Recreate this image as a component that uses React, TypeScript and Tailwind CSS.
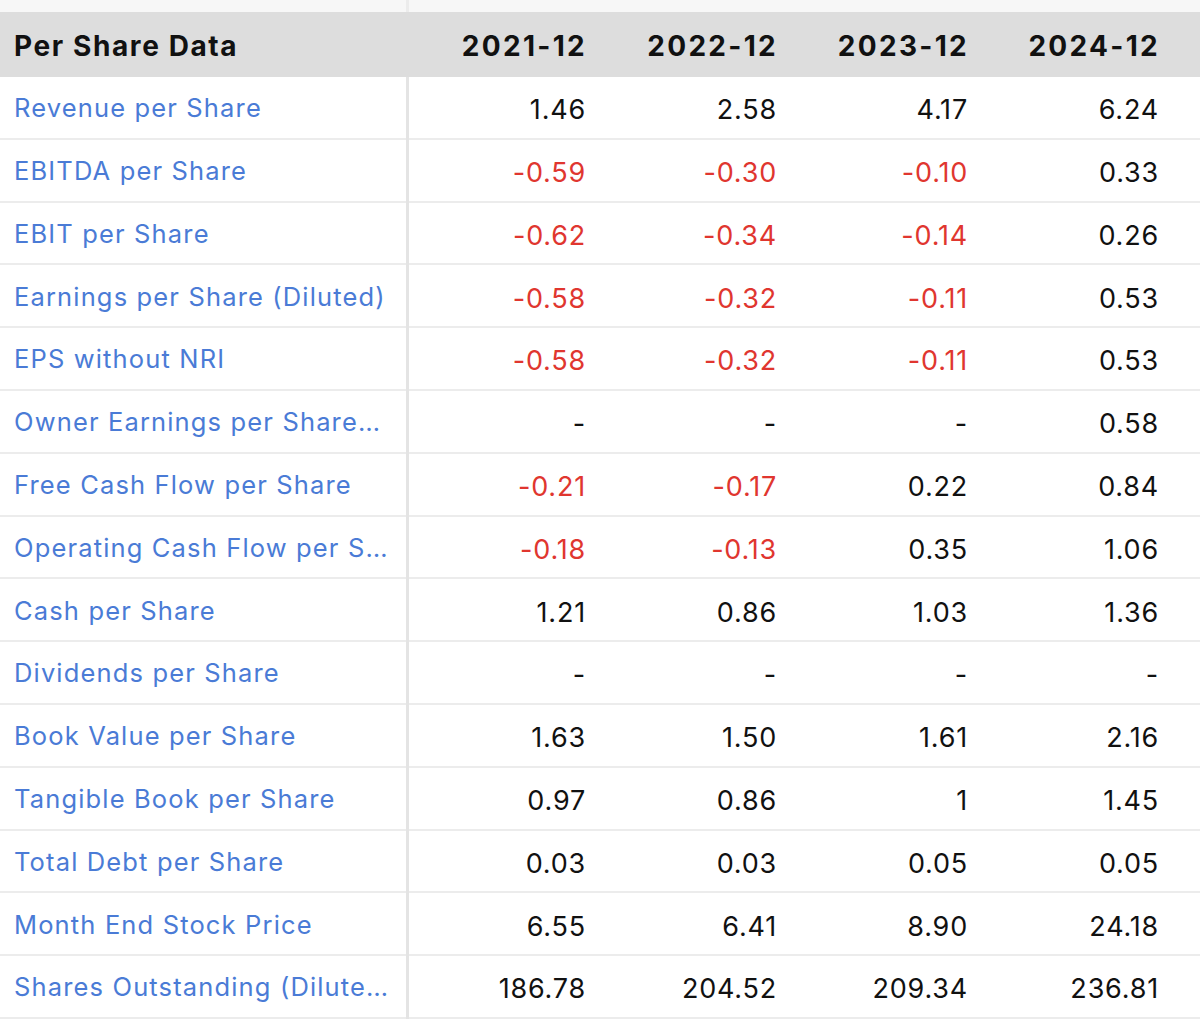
import React from "react";

type Row = { label: string; values: string[] };

const rows: Row[] = [
  { label: "Revenue per Share", values: ["1.46", "2.58", "4.17", "6.24"] },
  { label: "EBITDA per Share", values: ["-0.59", "-0.30", "-0.10", "0.33"] },
  { label: "EBIT per Share", values: ["-0.62", "-0.34", "-0.14", "0.26"] },
  { label: "Earnings per Share (Diluted)", values: ["-0.58", "-0.32", "-0.11", "0.53"] },
  { label: "EPS without NRI", values: ["-0.58", "-0.32", "-0.11", "0.53"] },
  { label: "Owner Earnings per Share…", values: ["-", "-", "-", "0.58"] },
  { label: "Free Cash Flow per Share", values: ["-0.21", "-0.17", "0.22", "0.84"] },
  { label: "Operating Cash Flow per S…", values: ["-0.18", "-0.13", "0.35", "1.06"] },
  { label: "Cash per Share", values: ["1.21", "0.86", "1.03", "1.36"] },
  { label: "Dividends per Share", values: ["-", "-", "-", "-"] },
  { label: "Book Value per Share", values: ["1.63", "1.50", "1.61", "2.16"] },
  { label: "Tangible Book per Share", values: ["0.97", "0.86", "1", "1.45"] },
  { label: "Total Debt per Share", values: ["0.03", "0.03", "0.05", "0.05"] },
  { label: "Month End Stock Price", values: ["6.55", "6.41", "8.90", "24.18"] },
  { label: "Shares Outstanding (Dilute…", values: ["186.78", "204.52", "209.34", "236.81"] },
];

const years = ["2021-12", "2022-12", "2023-12", "2024-12"];
const colW = ["w-[218px]", "w-[191px]", "w-[191px]", "w-[191px]"];

export default function App() {
  return (
    <div
      className="w-[1200px] h-[1019px] overflow-hidden bg-white"
      style={{ fontFamily: "Inter, 'Noto Sans', sans-serif" }}
    >
      <div className="h-[12px] bg-[#f7f7f7] flex">
        <div className="w-[406px] shrink-0" />
        <div className="w-[3px] bg-[#ececec]" />
      </div>
      {/* header */}
      <div className="flex h-[65px] bg-[#dddddd] items-center pt-[2px]">
        <div className="w-[409px] shrink-0 pl-[14px] text-[28px] font-bold text-[#111] tracking-[1.6px]">
          Per Share Data
        </div>
        {years.map((y, i) => (
          <div
            key={y}
            className={`${colW[i]} shrink-0 text-right pr-[40px] text-[28px] font-bold text-[#111] tracking-[2.3px]`}
          >
            {y}
          </div>
        ))}
      </div>
      {/* body */}
      {rows.map((r) => (
        <div key={r.label} className="flex h-[62.8px]">
          <div className="w-[406px] shrink-0 border-b-2 border-[#ececec] flex items-center pl-[14px] pr-[10px] pt-[2px]">
            <span className="block whitespace-nowrap text-[25.5px] text-[#4a7bd6] tracking-[1.15px]">
              {r.label}
            </span>
          </div>
          <div className="w-[3px] shrink-0 bg-[#e4e4e4]" />
          {r.values.map((v, i) => (
            <div
              key={i}
              className={`${colW[i]} shrink-0 border-b-2 border-[#ececec] flex items-center justify-end pr-[41px] pt-[6px] text-[27px] tracking-[0.8px] ${
                v.startsWith("-") && v !== "-" ? "text-[#e0362f]" : "text-[#111]"
              }`}
            >
              {v}
            </div>
          ))}
        </div>
      ))}
    </div>
  );
}
